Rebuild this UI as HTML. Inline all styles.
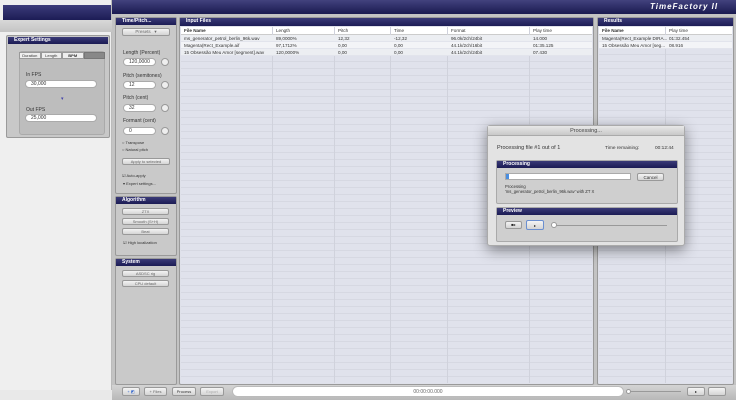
<!DOCTYPE html>
<html><head><style>
*{margin:0;padding:0;box-sizing:border-box}
body{width:736px;height:400px;position:relative;overflow:hidden;background:#e9e9e9;font-family:"Liberation Sans",sans-serif;font-size:5px;color:#333}
.a{position:absolute}
.nav{background:linear-gradient(#3a3a78,#1c1c55);color:#fff;font-weight:bold;font-size:5px;padding-left:6px;line-height:7px}
.panel{background:#c9c9c9;border:1px solid #9a9a9a;border-radius:2px}
.fld{background:#fff;border:1px solid #aaa;border-radius:5px;height:8px;font-size:5px;line-height:7px;padding-left:5px}
.btn{background:linear-gradient(#f4f4f4,#d4d4d4);border:1px solid #999;border-radius:2px;height:7px;font-size:4px;line-height:6px;text-align:center;color:#666}
.circ{width:8px;height:8px;border-radius:50%;background:#eee;border:1px solid #999}
.lbl{font-size:5px;color:#333}
.row{position:absolute;left:0;right:0;height:7px;border-bottom:1px solid #e2e4ec}
.row span{position:absolute;top:0;font-size:4.6px;line-height:7px;white-space:nowrap}
.grid{background:repeating-linear-gradient(#e0e2ec 0 6px,#d6d8e2 6px 7px)}
</style></head><body>
<!-- left window -->
<div class="a" style="left:0;top:0;width:112px;height:390px;background:#efefef;border-right:1px solid #bbb"></div>
<div class="a" style="left:3px;top:5px;width:108px;height:15px;background:linear-gradient(#3c3c7a,#1c1c55)"></div>
<div class="a" style="left:0;top:20px;width:112px;height:12px;background:linear-gradient(#d8d8d8,#c4c4c4)"></div>
<div class="a panel" style="left:6px;top:35px;width:104px;height:103px;background:#c8c8c8">
 <div class="nav" style="height:7px;margin:1px">Expert Settings</div>
 <div class="a" style="left:12px;top:15px;width:86px;height:84px;background:#bdbdbd;border-radius:3px;border:1px solid #aaa"></div>
 <div class="a" style="left:12px;top:16px;width:86px;height:7px;display:flex;font-size:4px;line-height:6px;text-align:center">
  <div style="flex:1;background:#eee;border:1px solid #999">Duration</div><div style="flex:1;background:#eee;border:1px solid #999">Length</div><div style="flex:1;background:#eee;border:1px solid #999;font-weight:bold">BPM</div><div style="flex:1;background:#888;border:1px solid #777"></div></div>
 <div class="a lbl" style="left:19px;top:36px">In FPS</div>
 <div class="a fld" style="left:18px;top:44px;width:72px">30,000</div>
 <div class="a" style="left:54px;top:60px;color:#44a;font-size:5px">▾</div>
 <div class="a lbl" style="left:19px;top:71px">Out FPS</div>
 <div class="a fld" style="left:18px;top:78px;width:72px">25,000</div>
</div>
<!-- main window -->
<div class="a" style="left:112px;top:0;width:624px;height:400px;background:#c3c3c3"></div>
<div class="a" style="left:112px;top:0;width:624px;height:14px;background:linear-gradient(#42427e,#1a1a50)"></div>
<div class="a" style="left:650px;top:2px;color:#fff;font-style:italic;font-weight:bold;font-size:8px;letter-spacing:1px">TimeFactory II</div>
<!-- time/pitch -->
<div class="a panel" style="left:115px;top:17px;width:62px;height:177px">
 <div class="nav" style="height:7px;margin:0">Time/Pitch...</div>
 <div class="a btn" style="left:6px;top:10px;width:48px;height:8px;font-size:4.5px">Presets &nbsp; ▾</div>
 <div class="a lbl" style="left:7px;top:32px">Length (Percent)</div>
 <div class="a fld" style="left:7px;top:40px;width:33px">120,0000</div><div class="a circ" style="left:45px;top:40px"></div>
 <div class="a lbl" style="left:7px;top:55px">Pitch (semitones)</div>
 <div class="a fld" style="left:7px;top:63px;width:33px">12</div><div class="a circ" style="left:45px;top:63px"></div>
 <div class="a lbl" style="left:7px;top:77px">Pitch (cent)</div>
 <div class="a fld" style="left:7px;top:86px;width:33px">32</div><div class="a circ" style="left:45px;top:86px"></div>
 <div class="a lbl" style="left:7px;top:100px">Formant (cent)</div>
 <div class="a fld" style="left:7px;top:109px;width:33px">0</div><div class="a circ" style="left:45px;top:109px"></div>
 <div class="a" style="left:6px;top:122px;font-size:4px">○ Transpose</div>
 <div class="a" style="left:6px;top:129px;font-size:4px">○ Natural pitch</div>
 <div class="a btn" style="left:6px;top:140px;width:48px">Apply to selected</div>
 <div class="a" style="left:6px;top:155px;font-size:4px">☑ Auto-apply</div>
 <div class="a" style="left:7px;top:163px;font-size:4px">▾ Expert settings...</div>
</div>
<div class="a panel" style="left:115px;top:196px;width:62px;height:60px">
 <div class="nav" style="height:7px">Algorithm</div>
 <div class="a btn" style="left:6px;top:11px;width:47px">ZTX</div>
 <div class="a btn" style="left:6px;top:21px;width:47px">Smooth (S+H)</div>
 <div class="a btn" style="left:6px;top:31px;width:47px">Beat</div>
 <div class="a" style="left:7px;top:43px;font-size:4px">☑ High localization</div>
</div>
<div class="a panel" style="left:115px;top:258px;width:62px;height:127px">
 <div class="nav" style="height:7px">System</div>
 <div class="a btn" style="left:6px;top:11px;width:47px">ASDSC rig</div>
 <div class="a btn" style="left:6px;top:21px;width:47px">CPU default</div>
</div>
<!-- input files -->
<div class="a panel" style="left:179px;top:17px;width:415px;height:368px;background:#dfe1ea">
 <div class="nav" style="height:8px">Input Files</div>
 <div class="a grid" style="left:1px;top:9px;width:411px;height:356px">
  <div class="a" style="left:0;top:0;right:0;height:8px;background:#fff;border-bottom:1px solid #ccc"></div>
  <div class="a" style="left:91px;top:0;width:1px;height:356px;background:#d0d2dc"></div>
  <div class="a" style="left:153px;top:0;width:1px;height:356px;background:#d0d2dc"></div>
  <div class="a" style="left:209px;top:0;width:1px;height:356px;background:#d0d2dc"></div>
  <div class="a" style="left:266px;top:0;width:1px;height:356px;background:#d0d2dc"></div>
  <div class="a" style="left:348px;top:0;width:1px;height:356px;background:#d0d2dc"></div>
  <div class="row" style="top:0;border:0"><span style="left:3px;font-weight:bold">File Name</span><span style="left:95px">Length</span><span style="left:157px">Pitch</span><span style="left:213px">Time</span><span style="left:270px">Format</span><span style="left:352px">Play time</span></div>
  <div class="row" style="top:8px;background:#eceef2"><span style="left:3px">ms_generator_petrol_berlin_96k.wav</span><span style="left:95px">89,0000%</span><span style="left:157px">12,32</span><span style="left:213px">-12,32</span><span style="left:270px">96.0k/2ch/24bit</span><span style="left:352px">14.000</span></div>
  <div class="row" style="top:15px;background:#f3f4f7"><span style="left:3px">Magenta(Rect_Example.aif</span><span style="left:95px">97,1712%</span><span style="left:157px">0,00</span><span style="left:213px">0,00</span><span style="left:270px">44.1k/2ch/16bit</span><span style="left:352px">01:35.125</span></div>
  <div class="row" style="top:22px;background:#eceef2"><span style="left:3px">15 Obsessão Meu Amor [segment].wav</span><span style="left:95px">120,0000%</span><span style="left:157px">0,00</span><span style="left:213px">0,00</span><span style="left:270px">44.1k/2ch/24bit</span><span style="left:352px">07.430</span></div>
 </div>
</div>
<!-- results -->
<div class="a panel" style="left:597px;top:17px;width:137px;height:368px;background:#dfe1ea">
 <div class="nav" style="height:8px">Results</div>
 <div class="a grid" style="left:1px;top:9px;width:133px;height:356px">
  <div class="a" style="left:0;top:0;right:0;height:8px;background:#fff;border-bottom:1px solid #ccc"></div>
  <div class="a" style="left:66px;top:0;width:1px;height:356px;background:#d0d2dc"></div>
  <div class="row" style="top:0;border:0"><span style="left:3px;font-weight:bold">File Name</span><span style="left:70px">Play time</span></div>
  <div class="row" style="top:8px;background:#eceef2"><span style="left:3px">Magenta(Rect_Example DIRA...</span><span style="left:70px">01:32.454</span></div>
  <div class="row" style="top:15px;background:#f3f4f7"><span style="left:3px">15 Obsessão Meu Amor [seg...</span><span style="left:70px">08.916</span></div>
 </div>
</div>
<!-- bottom bar -->
<div class="a" style="left:112px;top:385px;width:624px;height:15px;background:linear-gradient(#d4d4d4,#b8b8b8)"></div>
<div class="a btn" style="left:122px;top:387px;width:18px;height:9px;line-height:8px;color:#36c">+ ◩</div>
<div class="a btn" style="left:144px;top:387px;width:23px;height:9px;line-height:8px">+ Files</div>
<div class="a btn" style="left:172px;top:387px;width:24px;height:9px;line-height:8px;color:#333">Process</div>
<div class="a btn" style="left:200px;top:387px;width:24px;height:9px;line-height:8px;color:#aaa">Export</div>
<div class="a" style="left:232px;top:386px;width:392px;height:11px;background:#fff;border-radius:6px;border:1px solid #bbb;text-align:center;font-size:5px;line-height:10px;color:#666">00:00:00.000</div>
<div class="a" style="left:627px;top:391px;width:54px;height:1px;background:#999"></div>
<div class="a" style="left:626px;top:389px;width:5px;height:5px;border-radius:50%;background:#fff;border:1px solid #999"></div>
<div class="a btn" style="left:687px;top:387px;width:18px;height:9px;line-height:8px;color:#222">▸</div>
<div class="a btn" style="left:708px;top:387px;width:18px;height:9px"></div>
<!-- dialog -->
<div class="a" style="left:487px;top:125px;width:198px;height:121px;background:#e3e3e3;border:1px solid #aaa;border-radius:3px;box-shadow:0 4px 14px rgba(0,0,0,.45)">
 <div class="a" style="left:0;top:0;right:0;height:10px;background:linear-gradient(#e8e8e8,#c8c8c8);text-align:center;font-size:5.5px;line-height:10px;color:#444;border-bottom:1px solid #aaa">Processing...</div>
 <div class="a" style="left:9px;top:19px;font-size:5.5px">Processing file #1 out of 1</div>
 <div class="a" style="left:117px;top:20px;font-size:4.8px">Time remaining:</div>
 <div class="a" style="left:167px;top:20px;font-size:4.8px">00:12:44</div>
 <div class="a" style="left:8px;top:34px;width:182px;height:44px;background:#cfcfcf;border:1px solid #aaa;border-radius:2px">
  <div class="nav" style="height:7px">Processing</div>
  <div class="a" style="left:8px;top:12px;width:126px;height:7px;background:#fff;border:1px solid #aaa"><div style="width:3px;height:5px;background:#4a8ee0"></div></div>
  <div class="a btn" style="left:140px;top:12px;width:27px;height:8px;color:#333;font-size:4.5px;line-height:7px">Cancel</div>
  <div class="a" style="left:8px;top:23px;font-size:4.2px;width:90px;line-height:5px">Processing 'ms_generator_petrol_berlin_96k.wav' with ZT X</div>
 </div>
 <div class="a" style="left:8px;top:81px;width:182px;height:35px;background:#cfcfcf;border:1px solid #aaa;border-radius:2px">
  <div class="nav" style="height:7px">Preview</div>
  <div class="a btn" style="left:8px;top:13px;width:17px;height:8px;color:#222">■▸</div>
  <div class="a btn" style="left:29px;top:12px;width:18px;height:10px;border-color:#6b8fd0;color:#222;line-height:9px">▸</div>
  <div class="a" style="left:55px;top:17px;width:115px;height:1px;background:#999"></div>
  <div class="a" style="left:54px;top:14px;width:6px;height:6px;border-radius:50%;background:#fff;border:1px solid #999"></div>
 </div>
</div>
</body></html>
